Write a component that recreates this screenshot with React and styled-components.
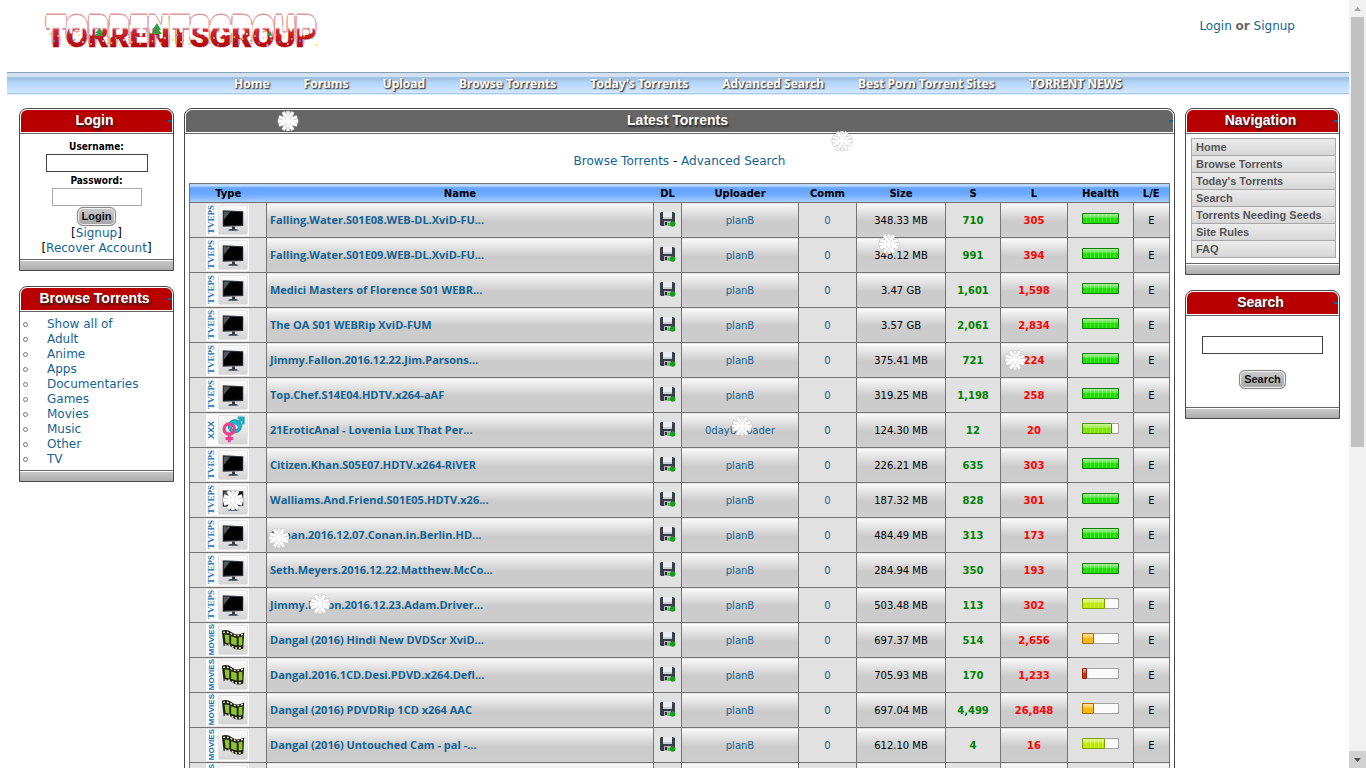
import React from 'react';
import styled, { createGlobalStyle, css } from 'styled-components';

const verdana = '"DejaVu Sans", Verdana, sans-serif';
const arial = '"Liberation Sans", Arial, sans-serif';
const link = '#146396';

const GlobalStyle = createGlobalStyle`
  *, *::before, *::after { box-sizing: border-box; }
  body {
    margin: 0;
    background: #fff;
    color: #000;
    font: 12px/15px ${verdana};
    overflow: hidden;
  }
  a { color: ${link}; text-decoration: none; }
`;

const Window = styled.div`
  display: flex;
  height: 100vh;
`;

const Page = styled.div`
  position: relative;
  flex: 1;
  min-width: 0;
  height: 100%;
  overflow: hidden;
`;

const Header = styled.header`
  display: flex;
  justify-content: space-between;
  align-items: flex-start;
  height: 72px;
  padding: 4px 54px 0 40px;
`;

const Account = styled.div`
  padding-top: 15px;
  b { color: #666; }
`;

const TopNav = styled.nav`
  display: flex;
  justify-content: center;
  align-items: center;
  gap: 34px;
  height: 23px;
  margin-left: 7px;
  border-top: 1px solid #8b9fb3;
  background: linear-gradient(#cfe1f2 0 4px, #a2c2e2 4px 6px, #b0cfee 8px, #b3d7fd 10px, #d3e8ff 20px, #abc9eb 20px 21px, #dcebfb 21px);
  a {
    color: #fff;
    font: bold 12px/20px "Noto Sans", sans-serif;
    text-shadow: 1px 1px 1px #444, 1px 1px 2px #666;
  }
`;

const Columns = styled.main`
  display: grid;
  grid-template-columns: 155px minmax(0, 1fr) 155px;
  gap: 10px;
  align-items: start;
  padding: 13px 9px 0 19px;
`;

const Side = styled.aside`
  display: grid;
  gap: 15px;
`;

const Panel = styled.section`
  border: 1px solid #484848;
  border-radius: 8px 8px 0 0;
`;

const PanelHead = styled.div`
  display: grid;
  grid-template-columns: 1fr 4px;
  height: 22px;
  margin: 1px;
  border-radius: 6px 6px 0 0;
  background: ${(p) => (p.$dark ? '#666' : '#b90000')};
  h2 {
    margin: 0;
    text-align: center;
    color: #fff;
    font: bold 14px/20px ${arial};
    text-shadow: 1px 2px 2px #222;
  }
`;

const Toggle = styled.button`
  align-self: center;
  width: 4px;
  height: 2px;
  padding: 0;
  border: 0;
  background: #0d659c;
`;

const PanelBody = styled.div`
  border-top: 1px solid #666;
`;

const PanelFoot = styled.div`
  height: 11px;
  border-top: 1px solid #666;
  background: linear-gradient(#fff 0 1px, #c8c8c8 1px, #acacac);
`;

const LoginForm = styled.form`
  display: flex;
  flex-direction: column;
  align-items: center;
  padding: 5px 0 3px;
  label {
    font: bold 10px/15px "DejaVu Sans Condensed", "DejaVu Sans", sans-serif;
  }
`;

const TextBox = styled.input`
  width: ${(p) => p.$width}px;
  height: 18px;
  padding: 0 3px;
  border: 1px solid ${(p) => (p.$soft ? '#a9a9a9' : '#444')};
  background: #fff;
  font: 11px ${arial};
  margin-bottom: 1px;
`;

const PushButton = styled.button`
  height: 19px;
  padding: 0 4px;
  border: 1px solid #888;
  border-radius: 6px;
  background: linear-gradient(#ccc, #a4a4a4);
  box-shadow: inset 0 0 0 1px #f2f2f2, 0 0 1px #888;
  color: #111;
  font: bold 11px/15px ${arial};
`;

const Categories = styled.ul`
  margin: 0;
  padding: 5px 3px 3px;
  list-style: none;
  li {
    display: flex;
    align-items: center;
    gap: 19px;
  }
  li::before {
    content: '';
    width: 5px;
    height: 5px;
    border: 1px solid #777;
    border-radius: 3px;
  }
`;

const SiteLinks = styled.ul`
  margin: 4px 3px 5px 5px;
  padding: 0;
  list-style: none;
  border: 1px solid #a8a8a8;
  border-bottom: 0;
  li {
    height: 17px;
    padding-left: 4px;
    border-bottom: 1px solid #a8a8a8;
    background: linear-gradient(#ececec, #d6d6d6);
  }
  a {
    display: block;
    color: #555;
    font: bold 11px/17px ${arial};
  }
`;

const SearchForm = styled.form`
  display: flex;
  flex-direction: column;
  align-items: center;
  gap: 15px;
  padding: 20px 0 18px;
`;

const Latest = styled.div`
  padding: 20px 4px;
`;

const SubLinks = styled.p`
  margin: 0 0 14px;
  text-align: center;
`;

const Table = styled.table`
  width: 100%;
  table-layout: fixed;
  border-collapse: collapse;
  font-size: 10px;
  line-height: 14px;
  th, td { border: 1px solid #757575; padding: 0; text-align: center; }
  th {
    height: 19px;
    padding-top: 2px;
    border-width: 1px 0;
    background: linear-gradient(#c4e0ff 0 1px, #a5cdff 2px, #66a4ff 3px, #69a7ff 9px, #a8ceff);
  }
  th:first-child { border-left-width: 1px; }
  th:last-child { border-right-width: 1px; }
  td { height: 35px; padding-top: 2px; background: #e1e1e1; }
  td:first-child { padding-top: 0; }
  td:nth-child(even) {
    background: linear-gradient(#fff, #f1f1f1 3px, #cbcbcb 18px, #cdcdcd);
  }
`;

const Col = styled.col`
  width: ${(p) => (p.$width ? `${p.$width}px` : 'auto')};
`;

const NameLink = styled.a`
  display: block;
  padding: 0 0 4px 3px;
  text-align: left;
  font: bold 11px/15px "Open Sans", sans-serif;
`;

const Count = styled.b`
  color: ${(p) => (p.$seed ? '#008000' : '#f00')};
`;

const Category = styled.a`
  display: inline-flex;
  align-items: center;
  gap: 1px;
  width: 43px;
  height: 32px;
  margin-right: 2px;
  padding-right: 1px;
  background: #fbfbfb;
  vertical-align: top;
  svg {
    width: 30px;
    height: 30px;
    border: 1px solid #e4e4e4;
    border-radius: 2px;
    background: linear-gradient(#fafafa, #d5d5d5);
  }
`;

const Tag = styled.span`
  width: 11px;
  writing-mode: vertical-rl;
  transform: rotate(180deg);
  text-align: center;
  color: #2272b2;
  ${(p) => p.$kind === 'TVEPS' && css`font: bold 9px/11px "Liberation Serif", serif;`}
  ${(p) => p.$kind === 'XXX' && css`font: bold 9px/11px ${arial};`}
  ${(p) => p.$kind === 'MOVIES' && css`font: bold 8px/11px ${arial};`}
`;

const IconButton = styled.button`
  display: inline-grid;
  padding: 0;
  border: 0;
  background: none;
  margin-bottom: 4px;
  vertical-align: middle;
`;

const tones = {
  5: ['#1ce100', '#0d7d05', 37],
  4: ['#7ce600', '#4f8f06', 30],
  3: ['#c2ea00', '#7f9e08', 23],
  2: ['#ffb400', '#a96c05', 12],
  1: ['#dd3300', '#8c1c05', 5],
};

const Health = styled.div`
  width: 37px;
  height: 11px;
  margin: 0 auto 5px;
  border-radius: 1px;
  box-shadow: inset 0 0 0 1px #a2a2a2;
  background: repeating-linear-gradient(90deg, #fff 0 3px, #f4f4f4 3px 4px);
  &::before {
    content: '';
    display: block;
    width: ${(p) => tones[p.$level][2]}px;
    height: 11px;
    border: 1px solid ${(p) => tones[p.$level][1]};
    border-radius: 1px;
    background:
      linear-gradient(rgba(255, 255, 255, 0.6), rgba(255, 255, 255, 0.2) 4px, transparent 4px),
      repeating-linear-gradient(90deg, transparent 0 3px, rgba(255, 255, 255, 0.2) 3px 4px),
      ${(p) => tones[p.$level][0]};
  }
  ${(p) => p.$level < 5 && css`
    background: linear-gradient(#a2a2a2 0 1px, transparent 1px 10px, #a2a2a2 10px), #fafafa;
  `}
`;

const Flake = styled.svg`
  position: absolute;
  left: ${(p) => p.$x - 11}px;
  top: ${(p) => p.$y - 11}px;
  width: 22px;
  height: 22px;
  pointer-events: none;
`;

const ScrollTrack = styled.div`
  display: flex;
  flex-direction: column;
  width: 17px;
  background: #f1f1f1;
`;

const ScrollThumb = styled.div`
  flex: 0 0 56%;
  margin: 0 2px;
  background: #c1c1c1;
`;

const ScrollEnd = styled.div`
  display: grid;
  place-items: center;
  height: 17px;
  margin-top: ${(p) => (p.$bottom ? 'auto' : 0)};
  background: ${(p) => (p.$bottom ? '#d2d2d2' : 'transparent')};
  color: ${(p) => (p.$bottom ? '#505050' : '#a3a3a3')};
`;

const LogoLink = styled.a`
  svg { display: block; }
  text {
    font: 900 32px Roboto, sans-serif;
    paint-order: stroke;
    text-shadow: 0 -2px #fff, 0 -4px #fff, 0 -6px #fff, 0 -8px #fff, 0 -10px #fff, 0 -11px #d99, 1px -9px #d99, -1px -9px #d99, 1px -6px #d99, -1px -6px #d99, 1px -3px #d99, -1px -3px #d99;
  }
`;

const confetti = ['#f5cf2c', '#4aa3d8', '#f5cf2c', '#ffffff', '#7bc67e'];

function Logo() {
  return (
    <LogoLink href="#" aria-label="TorrentsGroup home">
      <svg width="290" height="50" viewBox="0 0 290 50">
        <defs>
          <linearGradient id="frost" x1="0" y1="18" x2="0" y2="44" gradientUnits="userSpaceOnUse">
            <stop offset="0" stopColor="#fff" />
            <stop offset="0.2" stopColor="#fff" />
            <stop offset="0.3" stopColor="#cf2a30" />
            <stop offset="1" stopColor="#b4000c" />
          </linearGradient>
        </defs>
        <text x="6" y="43" fill="url(#frost)" stroke="#b39a9a" strokeWidth="1">TORRENTSGROUP</text>
        {Array.from({ length: 27 }, (_, i) => (
          <path key={i} d={`M${11 + i * 10} 22v${4 + ((i * 5) % 8)}`} stroke="#fff" strokeWidth="3" strokeLinecap="round" />
        ))}
        {Array.from({ length: 66 }, (_, i) => (
          <circle key={i} cx={10 + i * 4.1} cy={30 + ((i * 7) % 12)} r="1" fill={confetti[i % 5]} opacity="0.85" />
        ))}
        <path d="M60 24l-5 5h3l-4 3h9l-2-3h2zM117 19l-4 6h2l-3 5h10l-3-4h2zM231 27l-4 4h-2l7 1z" fill="#2f9e41" />
      </svg>
    </LogoLink>
  );
}

function Snowflake({ x, y }) {
  const arms = 'M2.500 11h17M7 3.500l8 15M15 3.500l-8 15M11 3v3M11 16v3M3.500 7.500l3 1M18.500 7.500l-3 1M3.500 14.500l3-1M18.500 14.500l-3-1';
  return (
    <Flake viewBox="0 0 22 22" $x={x} $y={y} fill="none" strokeLinecap="square" aria-hidden="true">
      <path d={arms} stroke="#c2c2c2" strokeWidth="3.800" />
      <path d={arms} stroke="#fff" strokeWidth="2.800" />
      <path d="M11 3v4M11 15v4M3 9l3 1M19 9l-3 1M8 7l1 2M14 7l-1 2M8 15l1-2M14 15l-1-2" stroke="#cfcfcf" strokeWidth=".8" />
    </Flake>
  );
}

const pictures = {
  TVEPS: (
    <svg viewBox="0 0 30 30" aria-hidden="true">
      <path d="M10 25.500q5-2 10 0l-1 1.200h-8zM14 22h3v3h-3z" fill="#2a3038" />
      <path d="M4 4.500l22 1.200v15.800l-22 .8z" fill="#30343a" />
      <path d="M5 5.800l20 1v13.400l-20 .8z" fill="#030303" />
      <path d="M5 5.800l7 .4L5 15z" fill="#55585c" />
      <path d="M10 26h11" stroke="#6b8294" strokeWidth="1" />
    </svg>
  ),
  XXX: (
    <svg viewBox="0 0 30 30" fill="none" aria-hidden="true">
      <circle cx="17" cy="11" r="5.500" stroke="#117f92" strokeWidth="4" />
      <circle cx="17" cy="11" r="5.500" stroke="#22b4ca" strokeWidth="2.500" />
      <path d="M20 7l5-4M20 2h6v7" stroke="#22a9c0" strokeWidth="3" />
      <circle cx="11" cy="14" r="5.500" stroke="#ef3f8d" strokeWidth="3.500" />
      <path d="M11 19v9M7 24h8" stroke="#ef3f8d" strokeWidth="3.200" />
      <path d="M14 8a6 6 0 0 1 8 5" stroke="#22b4ca" strokeWidth="3" />
    </svg>
  ),
  MOVIES: (
    <svg viewBox="0 0 30 30" aria-hidden="true">
      <path d="M3 5q6-2 11 2t13 0l-1 17q-7 3-12-1t-9-1z" fill="#1e2113" />
      <path d="M6 9q3 0 5 1v9q-2-1-4-1zM13 11l6 2v8l-6-2zM21 12q3 0 4-1v9q-2 1-4 1z" fill="#8fc42e" />
      <path d="M4.500 6.800q5-1 9.500 2t12 0M6 20.500q4-1 8 1.500t11 1" fill="none" stroke="#f4f4e2" strokeWidth="1.500" strokeDasharray="2 2" />
    </svg>
  ),
};

function Disk() {
  return (
    <svg width="16" height="15" viewBox="0 0 16 15" aria-hidden="true">
      <path d="M1 0h12l2 1v13H1l-1-1V1z" fill="#3a3f47" />
      <path d="M3 0h9v7H3z" fill="#e9ebee" />
      <path d="M3 5h9v2H3z" fill="#c9cdd2" />
      <path d="M4 9h7v5H4z" fill="#aeb3ba" />
      <path d="M5 10h2v3H5z" fill="#22252b" />
      <path d="M8 11h3v3H8z" fill="#5cb85c" />
      <circle cx="12.700" cy="12" r="2.700" fill="#189c1c" />
    </svg>
  );
}

const rows = [
  ['TVEPS', 'Falling.Water.S01E08.WEB-DL.XviD-FU...', '348.33 MB', '710', '305', 5],
  ['TVEPS', 'Falling.Water.S01E09.WEB-DL.XviD-FU...', '348.12 MB', '991', '394', 5],
  ['TVEPS', 'Medici Masters of Florence S01 WEBR...', '3.47 GB', '1,601', '1,598', 5],
  ['TVEPS', 'The OA S01 WEBRip XviD-FUM', '3.57 GB', '2,061', '2,834', 5],
  ['TVEPS', 'Jimmy.Fallon.2016.12.22.Jim.Parsons...', '375.41 MB', '721', '224', 5],
  ['TVEPS', 'Top.Chef.S14E04.HDTV.x264-aAF', '319.25 MB', '1,198', '258', 5],
  ['XXX', '21EroticAnal - Lovenia Lux That Per...', '124.30 MB', '12', '20', 4, '0dayUploader'],
  ['TVEPS', 'Citizen.Khan.S05E07.HDTV.x264-RiVER', '226.21 MB', '635', '303', 5],
  ['TVEPS', 'Walliams.And.Friend.S01E05.HDTV.x26...', '187.32 MB', '828', '301', 5],
  ['TVEPS', 'Conan.2016.12.07.Conan.in.Berlin.HD...', '484.49 MB', '313', '173', 5],
  ['TVEPS', 'Seth.Meyers.2016.12.22.Matthew.McCo...', '284.94 MB', '350', '193', 5],
  ['TVEPS', 'Jimmy.Fallon.2016.12.23.Adam.Driver...', '503.48 MB', '113', '302', 3],
  ['MOVIES', 'Dangal (2016) Hindi New DVDScr XviD...', '697.37 MB', '514', '2,656', 2],
  ['MOVIES', 'Dangal.2016.1CD.Desi.PDVD.x264.Defl...', '705.93 MB', '170', '1,233', 1],
  ['MOVIES', 'Dangal (2016) PDVDRip 1CD x264 AAC', '697.04 MB', '4,499', '26,848', 2],
  ['MOVIES', 'Dangal (2016) Untouched Cam - pal -...', '612.10 MB', '4', '16', 3],
  ['MOVIES', 'Dangal (2016)', '700.00 MB', '10', '20', 3],
];

const flakes = [[288, 121], [842, 141], [889, 244], [1015, 360], [742, 426], [233, 500], [279, 538], [320, 604]];
const menu = ['Home', 'Forums', 'Upload', 'Browse Torrents', "Today's Torrents", 'Advanced Search', 'Best Porn Torrent Sites', 'TORRENT NEWS'];
const categories = ['Show all of', 'Adult', 'Anime', 'Apps', 'Documentaries', 'Games', 'Movies', 'Music', 'Other', 'TV'];
const siteLinks = ['Home', 'Browse Torrents', "Today's Torrents", 'Search', 'Torrents Needing Seeds', 'Site Rules', 'FAQ'];
const headings = ['Type', 'Name', 'DL', 'Uploader', 'Comm', 'Size', 'S', 'L', 'Health', 'L/E'];
const widths = [77, 0, 28, 117, 58, 89, 55, 67, 66, 36];

function Block({ title, dark, open, children }) {
  return (
    <Panel>
      <PanelHead $dark={dark}>
        <h2>{title}</h2>
        <Toggle type="button" aria-label={`Collapse ${title}`} />
      </PanelHead>
      <PanelBody>{children}</PanelBody>
      {!open && <PanelFoot />}
    </Panel>
  );
}

function TorrentRow({ row }) {
  const [kind, name, size, seeds, leeches, level, uploader = 'planB'] = row;
  return (
    <tr>
      <td><Category href="#" aria-label={kind}><Tag $kind={kind}>{kind}</Tag>{pictures[kind]}</Category></td>
      <td><NameLink href="#">{name}</NameLink></td>
      <td><IconButton type="button" aria-label="Download"><Disk /></IconButton></td>
      <td><a href="#">{uploader}</a></td>
      <td><a href="#">0</a></td>
      <td>{size}</td>
      <td><Count $seed>{seeds}</Count></td>
      <td><Count>{leeches}</Count></td>
      <td><Health $level={level} /></td>
      <td>E</td>
    </tr>
  );
}

export default function App() {
  return (
    <Window>
      <GlobalStyle />
      <Page>
        <Header>
          <Logo />
          <Account><a href="#">Login</a> <b>or</b> <a href="#">Signup</a></Account>
        </Header>
        <TopNav>{menu.map((m) => <a href="#" key={m}>{m}</a>)}</TopNav>
        <Columns>
          <Side>
            <Block title="Login">
              <LoginForm>
                <label htmlFor="user">Username:</label>
                <TextBox id="user" $width={102} />
                <label htmlFor="pass">Password:</label>
                <TextBox id="pass" type="password" $width={90} $soft />
                <PushButton type="button">Login</PushButton>
                <span>[<a href="#">Signup</a>]</span>
                <span>[<a href="#">Recover Account</a>]</span>
              </LoginForm>
            </Block>
            <Block title="Browse Torrents">
              <Categories>{categories.map((c) => <li key={c}><a href="#">{c}</a></li>)}</Categories>
            </Block>
          </Side>
          <Block title="Latest Torrents" dark open>
            <Latest>
              <SubLinks><a href="#">Browse Torrents</a> - <a href="#">Advanced Search</a></SubLinks>
              <Table>
                <colgroup>{widths.map((w, i) => <Col key={i} $width={w} />)}</colgroup>
                <thead><tr>{headings.map((h) => <th key={h}>{h}</th>)}</tr></thead>
                <tbody>{rows.map((r, i) => <TorrentRow key={i} row={r} />)}</tbody>
              </Table>
            </Latest>
          </Block>
          <Side>
            <Block title="Navigation">
              <SiteLinks>{siteLinks.map((s) => <li key={s}><a href="#">{s}</a></li>)}</SiteLinks>
            </Block>
            <Block title="Search">
              <SearchForm>
                <TextBox aria-label="Search torrents" $width={121} />
                <PushButton type="button">Search</PushButton>
              </SearchForm>
            </Block>
          </Side>
        </Columns>
        {flakes.map(([x, y]) => <Snowflake key={x} x={x} y={y} />)}
      </Page>
      <ScrollTrack aria-hidden="true">
        <ScrollEnd><svg width="7" height="4" viewBox="0 0 7 4"><path d="M0 4l3.500-4L7 4z" fill="currentColor" /></svg></ScrollEnd>
        <ScrollThumb />
        <ScrollEnd $bottom><svg width="7" height="4" viewBox="0 0 7 4"><path d="M0 0h7L3.500 4z" fill="currentColor" /></svg></ScrollEnd>
      </ScrollTrack>
    </Window>
  );
}
